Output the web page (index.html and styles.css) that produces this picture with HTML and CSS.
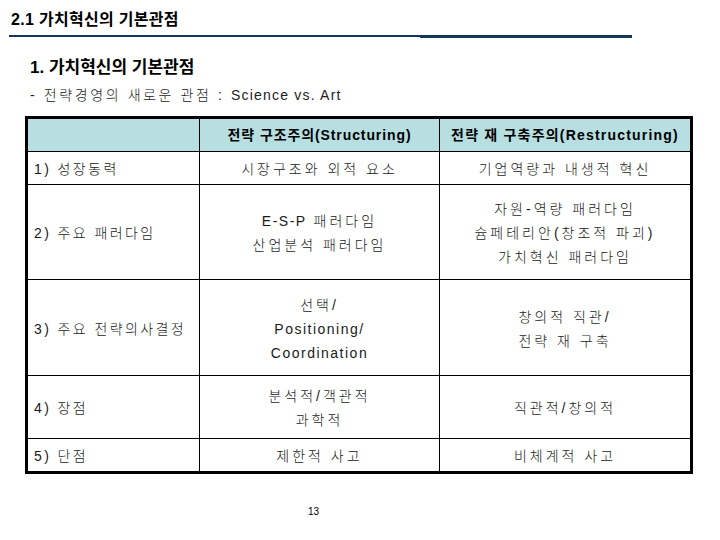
FILE: index.html
```html
<!DOCTYPE html>
<html lang="ko">
<head>
<meta charset="utf-8">
<link rel="stylesheet" href="styles.css">
</head>
<body>
<div class="page">
  <header class="slide-head">
    <h1 class="slide-title">2.1 가치혁신의 기본관점</h1>
    <div class="rule"><span class="rule-thin"></span><span class="rule-thick"></span></div>
  </header>
  <section class="content">
    <h2 class="section-title">1. 가치혁신의 기본관점</h2>
    <p class="subtitle">- 전략경영의 새로운 관점 : <span class="latin">Science vs. Art</span></p>
    <table class="grid">
      <colgroup>
        <col class="c1"><col class="c2"><col class="c3">
      </colgroup>
      <thead>
        <tr class="r-head">
          <th></th>
          <th>전략 구조주의(Structuring)</th>
          <th class="wide">전략 재 구축주의(Restructuring)</th>
        </tr>
      </thead>
      <tbody>
        <tr class="r1">
          <td class="label">1) 성장동력</td>
          <td>시장구조와 외적 요소</td>
          <td>기업역량과 내생적 혁신</td>
        </tr>
        <tr class="r2">
          <td class="label">2) 주요 패러다임</td>
          <td><span class="latin">E-S-P</span> 패러다임<br>산업분석 패러다임</td>
          <td>자원-역량 패러다임<br>슘페테리안(창조적 파괴)<br>가치혁신 패러다임</td>
        </tr>
        <tr class="r3">
          <td class="label">3) 주요 전략의사결정</td>
          <td>선택/<br><span class="latin">Positioning/</span><br><span class="latin">Coordination</span></td>
          <td>창의적 직관/<br>전략 재 구축</td>
        </tr>
        <tr class="r4">
          <td class="label">4) 장점</td>
          <td>분석적/객관적<br>과학적</td>
          <td>직관적/창의적</td>
        </tr>
        <tr class="r5">
          <td class="label">5) 단점</td>
          <td>제한적 사고</td>
          <td>비체계적 사고</td>
        </tr>
      </tbody>
    </table>
  </section>
  <footer class="page-num">13</footer>
</div>
</body>
</html>
```
FILE: styles.css
```css
html, body {
  margin: 0;
  padding: 0;
  background: #ffffff;
}
body {
  width: 720px;
  height: 540px;
  overflow: hidden;
  font-family: "Liberation Sans", "Noto Sans CJK KR", sans-serif;
  color: #111111;
}
.page {
  width: 720px;
  height: 540px;
  display: flex;
  flex-direction: column;
}
.slide-head {
  padding: 10px 0 0 9px;
}
.slide-title {
  margin: 0 0 0 2px;
  font-size: 16px;
  line-height: 20px;
  font-weight: bold;
  letter-spacing: 0.3px;
  color: #000000;
}
.rule {
  margin-top: 5px;
  width: 623px;
  display: flex;
  align-items: flex-start;
}
.rule-thin {
  width: 411px;
  height: 2px;
  background: #15375b;
}
.rule-thick {
  flex: 1;
  height: 3px;
  background: #15375b;
}
.content {
  padding-left: 25px;
}
.section-title {
  margin: 19px 0 0 5px;
  font-size: 17px;
  line-height: 22px;
  font-weight: bold;
  color: #000000;
}
.subtitle {
  margin: 7px 0 0 5px;
  font-size: 14px;
  line-height: 18px;
  font-weight: 300;
  letter-spacing: 2.6px;
  color: #222222;
}
.latin {
  letter-spacing: 1.5px;
}
.subtitle .latin {
  letter-spacing: 1.2px;
}
.grid {
  margin-top: 12px;
  border-collapse: collapse;
  border: 3px solid #000000;
  width: 665px;
  table-layout: fixed;
  font-size: 14px;
  font-weight: 300;
  letter-spacing: 3px;
}
.c1 { width: 173px; }
.c2 { width: 240px; }
.c3 { width: 252px; }
.grid th,
.grid td {
  border: 1px solid #000000;
  padding: 0 2px;
  text-align: center;
  vertical-align: middle;
  line-height: 24px;
  color: #1a1a1a;
}
.grid td {
  padding-top: 2px;
}
.grid th {
  background: #b7dfe1;
  font-weight: bold;
  letter-spacing: 0.9px;
  color: #000000;
}
.grid th.wide {
  letter-spacing: 1.2px;
}
.grid td.label {
  text-align: left;
  padding-left: 6px;
  letter-spacing: 2.4px;
}
.r-head { height: 34px; }
.r1 { height: 33px; }
.r2 { height: 95px; }
.r3 { height: 96px; }
.r4 { height: 63px; }
.r5 { height: 34px; }
.page-num {
  margin: 32px 0 0 308px;
  font-size: 10px;
  line-height: 12px;
  color: #000000;
}
```
